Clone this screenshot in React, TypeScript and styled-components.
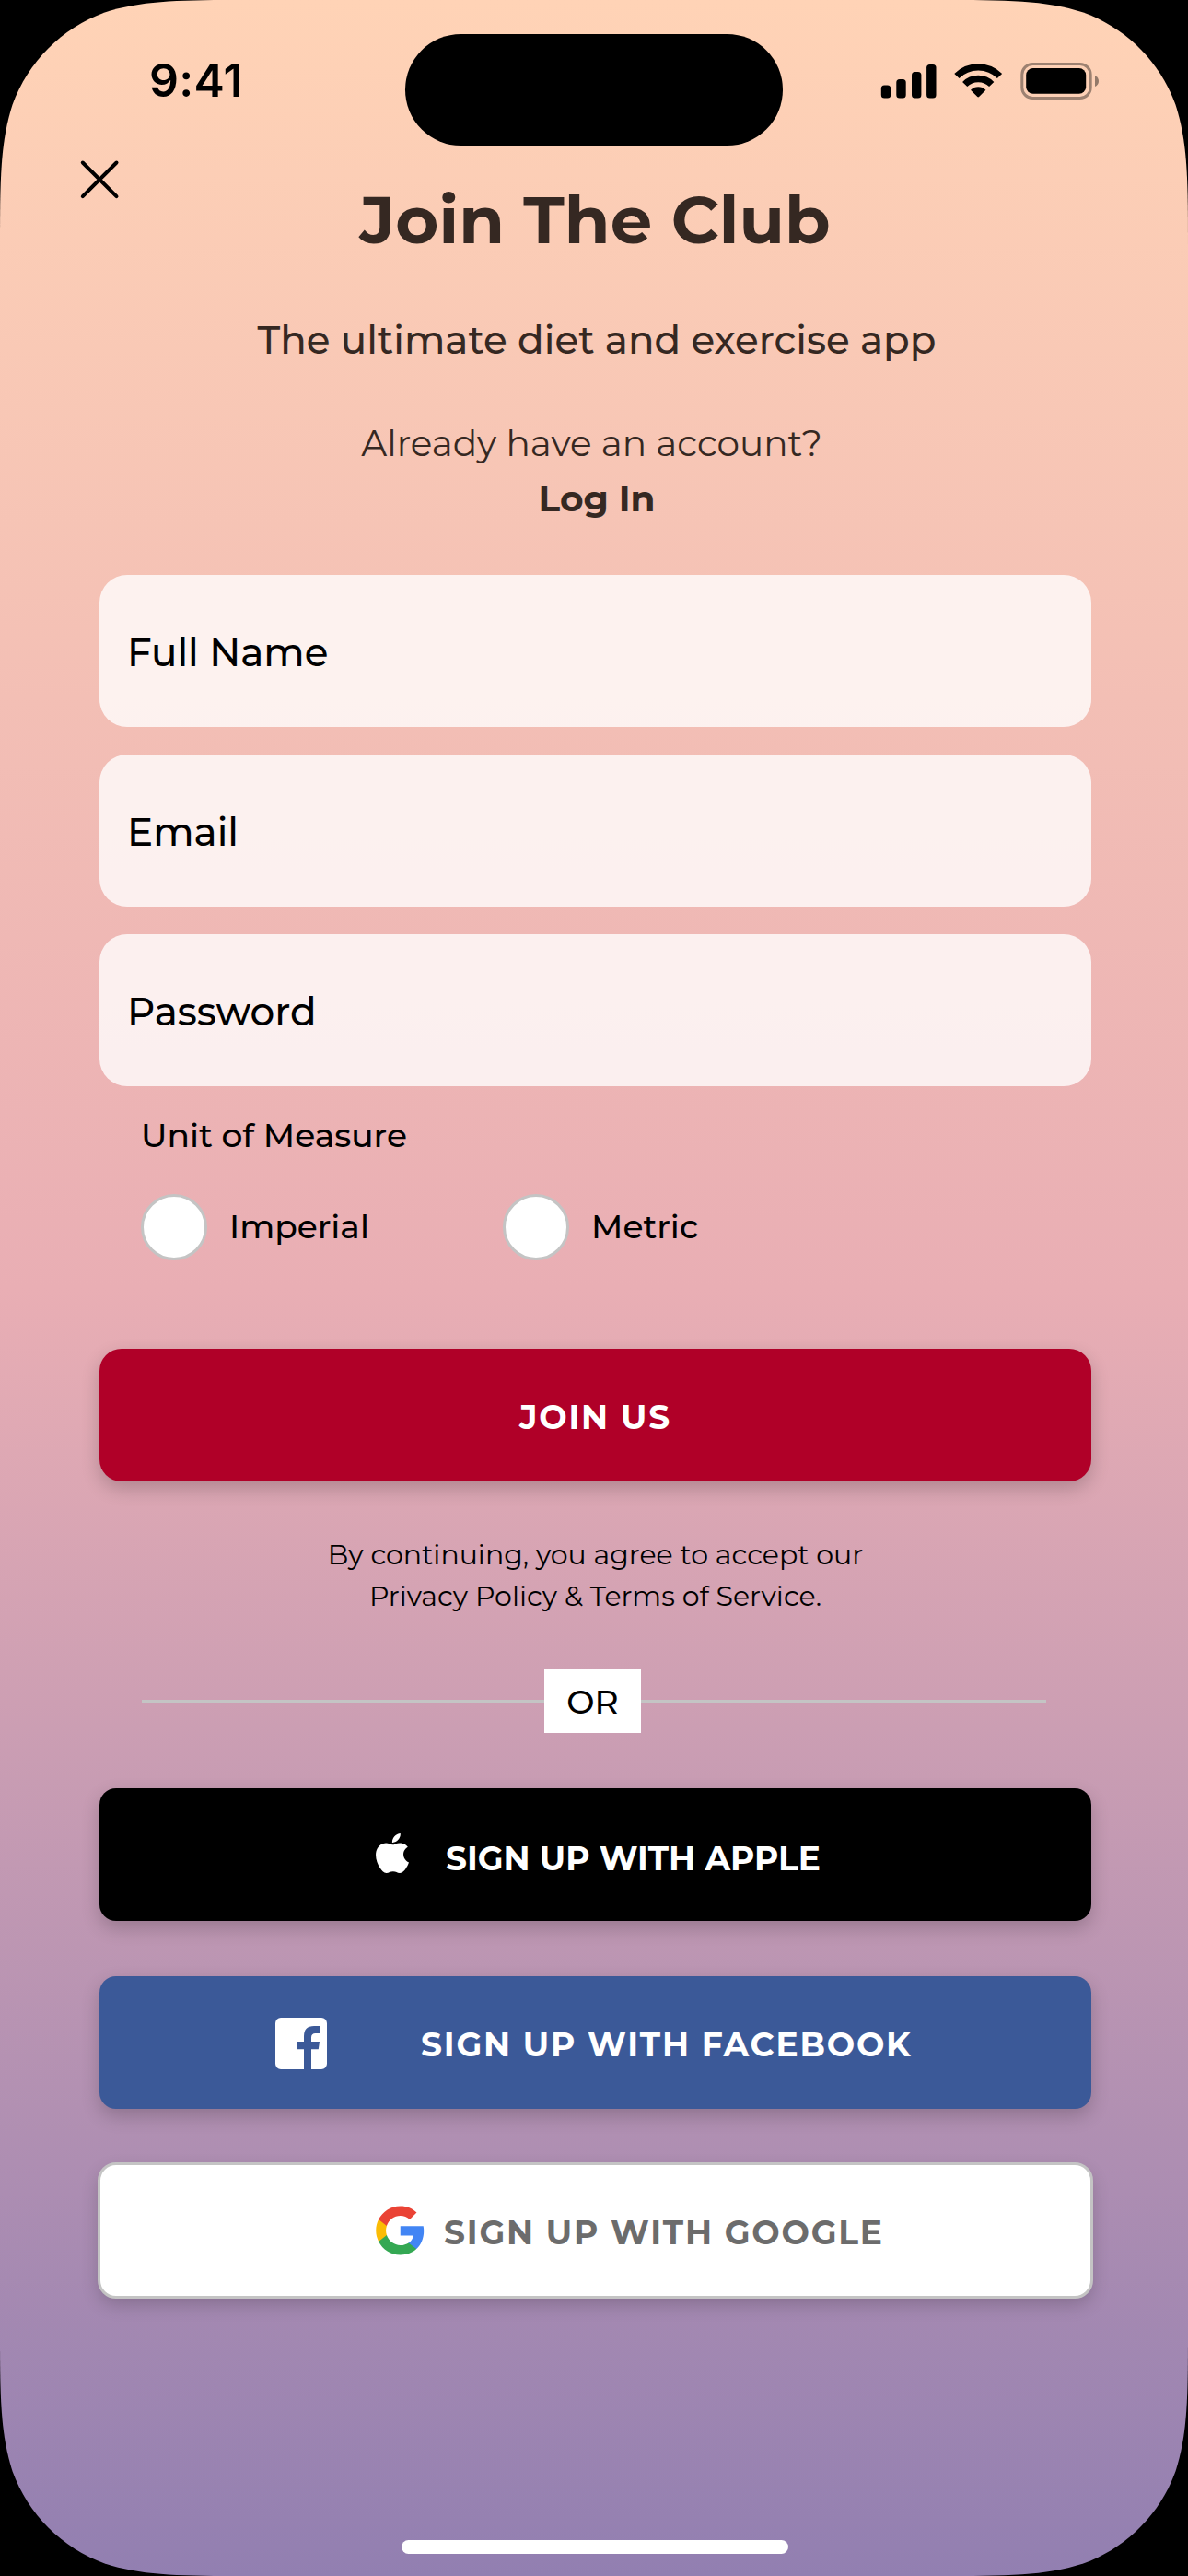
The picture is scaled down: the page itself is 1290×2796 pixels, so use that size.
import React from "react";
import styled, { createGlobalStyle } from "styled-components";

const GlobalStyle = createGlobalStyle`
  * { box-sizing: border-box; }
  html, body { margin: 0; background: #000; }
  button, input { font: inherit; border: 0; padding: 0; margin: 0; }
`;

const INK = "#352822";

const Screen = styled.main`
  width: 1290px;
  height: 2796px;
  position: relative;
  overflow: hidden;
  display: flex;
  flex-direction: column;
  align-items: center;
  font-family: Montserrat, Inter, "Noto Sans", sans-serif;
  color: #000;
  background: linear-gradient(180deg, #ffd3b6 0%, #e9aeb4 50%, #927fb1 100%);
  clip-path: path("M0 275 C0 196 0 156 13.5 113.7 C30.4 67.1 67.1 30.4 113.7 13.5 C156 0 196 0 275 0 L1015 0 C1094 0 1134 0 1176.3 13.5 C1222.9 30.4 1259.6 67.1 1276.5 113.7 C1290 156 1290 196 1290 275 L1290 2521 C1290 2600 1290 2640 1276.5 2682.3 C1259.6 2728.9 1222.9 2765.6 1176.3 2782.5 C1134 2796 1094 2796 1015 2796 L275 2796 C196 2796 156 2796 113.7 2782.5 C67.1 2765.6 30.4 2728.9 13.5 2682.3 C0 2640 0 2600 0 2521 Z");
`;

const StatusBar = styled.header`
  width: 100%;
  height: 158px;
  padding: 37px 97px 0 162px;
  display: grid;
  grid-template-columns: 278px 410px 1fr;
  align-items: start;
`;

const Clock = styled.time`
  font: 600 50px/60px Inter, sans-serif;
  padding-top: 20px;
  letter-spacing: 0.3px;
`;

const Island = styled.div`
  height: 121px;
  border-radius: 61px;
  background: #000;
`;

const StatusIcons = styled.div`
  display: flex;
  justify-content: flex-end;
  padding-top: 31px;
`;

const CloseButton = styled.button`
  align-self: flex-start;
  width: 44px;
  height: 44px;
  margin: 15px 0 0 86px;
  background: none;
  display: flex;
`;

const Line = styled.p<{ $size: number; $height: number; $weight: number; $left?: number; $right?: number; $top?: number; $color?: string }>`
  margin: ${(p) => p.$top ?? 0}px 0 0;
  padding: 0 ${(p) => p.$right ?? 0}px 0 ${(p) => p.$left ?? 0}px;
  font-size: ${(p) => p.$size}px;
  line-height: ${(p) => p.$height}px;
  font-weight: ${(p) => p.$weight};
  color: ${(p) => p.$color ?? INK};
  white-space: nowrap;
`;

const Title = styled.h1`
  margin: -24px 0 0;
  padding-left: 2px;
  font-size: 72px;
  line-height: 90px;
  font-weight: 700;
  color: ${INK};
`;

const Form = styled.form`
  width: 1077px;
  margin: 53px 0 0 3px;
  display: flex;
  flex-direction: column;
`;

const Fields = styled.div`
  display: flex;
  flex-direction: column;
  gap: 30px;
`;

const Field = styled.input`
  height: 165px;
  padding: 2px 30px 0;
  border-radius: 30px;
  background: rgba(255, 255, 255, 0.79);
  font-size: 42px;
  font-weight: 500;
  outline: none;
  &::placeholder { color: #000; opacity: 1; }
`;

const Units = styled.fieldset`
  margin: 30px 0 0;
  padding: 0 45px;
  border: 0;
  height: 255px;
`;

const Legend = styled.legend`
  padding: 0;
  font-size: 36px;
  line-height: 46px;
  font-weight: 500;
`;

const Options = styled.div`
  margin-top: 41px;
  display: grid;
  grid-template-columns: 393px 393px;
`;

const Option = styled.label`
  display: flex;
  align-items: center;
  gap: 24px;
  font-size: 36px;
  font-weight: 500;
`;

const OptionText = styled.span`
  padding-bottom: 2px;
`;

const Radio = styled.input`
  appearance: none;
  width: 72px;
  height: 72px;
  flex: none;
  border-radius: 50%;
  border: 3px solid #c4c4c4;
  background: #fff;
`;

const Button = styled.button<{ $bg: string; $color?: string; $radius?: number; $track: number; $indent?: number; $gap?: number; $outlined?: boolean }>`
  height: 144px;
  width: 100%;
  display: flex;
  align-items: center;
  justify-content: ${(p) => (p.$indent ? "flex-start" : "center")};
  gap: ${(p) => p.$gap ?? 0}px;
  padding-left: ${(p) => p.$indent ?? 0}px;
  border-radius: ${(p) => p.$radius ?? 18}px;
  background: ${(p) => p.$bg};
  color: ${(p) => p.$color ?? "#fff"};
  font-size: 36px;
  font-weight: 700;
  letter-spacing: ${(p) => p.$track}px;
  white-space: nowrap;
  outline: ${(p) => (p.$outlined ? "3px solid #c4c4c4" : "none")};
  outline-offset: -1.5px;
  box-shadow: 0 8px 20px rgba(0, 0, 0, 0.2);
`;

const Label = styled.span<{ $drop: number }>`
  padding-top: ${(p) => p.$drop}px;
`;

const IconSlot = styled.span<{ $raise?: number; $drop?: number }>`
  display: flex;
  flex: none;
  padding: ${(p) => p.$drop ?? 0}px 0 ${(p) => p.$raise ?? 0}px;
`;

const Terms = styled.div`
  margin-top: 57px;
  display: flex;
  flex-direction: column;
  align-items: center;
`;

const Divider = styled.div`
  width: 982px;
  height: 69px;
  margin: 57px auto 60px 46px;
  display: grid;
  grid-template-columns: 437px 105px 1fr;
  align-items: center;
`;

const Rule = styled.span`
  height: 3px;
  background: #c4c4c4;
`;

const Or = styled.span`
  height: 69px;
  padding-top: 1px;
  display: flex;
  align-items: center;
  justify-content: center;
  background: #fff;
  font-size: 36px;
  font-weight: 500;
`;

const Socials = styled.div`
  display: flex;
  flex-direction: column;
  gap: 60px;
`;

const HomeIndicator = styled.div`
  width: 420px;
  height: 15px;
  margin: auto 0 24px 2px;
  border-radius: 8px;
  background: #fff;
`;

const SignalGlyphs = () => (
  <svg width="237" height="40" viewBox="0 0 237 40">
    <rect x="0.8" y="24.5" width="10.4" height="14" rx="3.5" />
    <rect x="17.3" y="18" width="10.4" height="20.5" rx="3.5" />
    <rect x="34" y="10" width="10.4" height="28.5" rx="3.5" />
    <rect x="50.1" y="2" width="10.4" height="36.5" rx="3.5" />
    <g fill="none" stroke="#000" strokeWidth="7.4">
      <path d="M82.9 14.5 A33 33 0 0 1 129.5 14.5" />
      <path d="M91.7 23.5 A20.5 20.5 0 0 1 120.7 23.5" />
    </g>
    <path d="M98 29.7 A11.6 11.6 0 0 1 114.4 29.7 L107.1 37 Q106.2 37.9 105.3 37 Z" />
    <rect x="153.8" y="1.5" width="74.4" height="37" rx="11.5" fill="none" stroke="#000" strokeOpacity=".38" strokeWidth="3" />
    <rect x="158.2" y="6" width="65" height="27.8" rx="7.5" />
    <path d="M233 14 Q237 16 237 20 Q237 24 233 26 Z" fillOpacity=".42" />
  </svg>
);

const CloseGlyph = () => (
  <svg width="44" height="44" viewBox="0 0 44 44" stroke="#000" strokeWidth="4" strokeLinecap="round">
    <path d="M3.8 3.5 40.5 40.2M40.5 3.5 3.8 40.2" />
  </svg>
);

const AppleGlyph = () => (
  <svg width="36" height="43" viewBox="2.2 0 19.6 24" preserveAspectRatio="none" fill="#fff">
    <path d="M12.152 6.896c-.948 0-2.415-1.078-3.96-1.04-2.04.027-3.91 1.183-4.961 3.014-2.117 3.675-.546 9.103 1.519 12.09 1.013 1.454 2.208 3.09 3.792 3.039 1.52-.065 2.09-.987 3.935-.987 1.831 0 2.35.987 3.96.948 1.637-.026 2.676-1.48 3.676-2.948 1.156-1.688 1.636-3.325 1.662-3.415-.039-.013-3.182-1.221-3.22-4.857-.026-3.04 2.48-4.494 2.597-4.559-1.429-2.09-3.623-2.324-4.39-2.376-2-.156-3.675 1.09-4.61 1.09zM15.53 3.83c.843-1.012 1.4-2.427 1.245-3.83-1.207.052-2.662.805-3.532 1.818-.78.896-1.454 2.338-1.273 3.714 1.338.104 2.715-.688 3.559-1.701" />
  </svg>
);

const FacebookGlyph = () => (
  <svg width="56" height="56" viewBox="0 0 56 56" fill="#fff">
    <path d="M6 0H50A6 6 0 0 1 56 6V50A6 6 0 0 1 50 56H39V34.3H46.8L48 26H39V21.5Q39 17 43.5 17H48V9H42Q31 9 31 20V26H23V34.3H31V56H6A6 6 0 0 1 0 50V6A6 6 0 0 1 6 0Z" />
  </svg>
);

const GoogleGlyph = () => (
  <svg width="53" height="54" viewBox="0.9 0.9 22 22.2">
    <path fill="#4285F4" d="M22.56 12.25c0-.78-.07-1.53-.2-2.25H12v4.26h5.92c-.26 1.37-1.04 2.53-2.21 3.31v2.77h3.57c2.08-1.92 3.28-4.74 3.28-8.09z" />
    <path fill="#34A853" d="M12 23c2.97 0 5.46-.98 7.28-2.66l-3.57-2.77c-.98.66-2.23 1.06-3.71 1.06-2.86 0-5.29-1.93-6.16-4.53H2.18v2.84C3.99 20.53 7.7 23 12 23z" />
    <path fill="#FBBC05" d="M5.84 14.09c-.22-.66-.35-1.36-.35-2.09s.13-1.43.35-2.09V7.07H2.18C1.43 8.55 1 10.22 1 12s.43 3.45 1.18 4.93l3.66-2.84z" />
    <path fill="#EA4335" d="M12 5.38c1.62 0 3.06.56 4.21 1.64l3.15-3.15C17.45 2.09 14.97 1 12 1 7.7 1 3.99 3.47 2.18 7.07l3.66 2.84c.87-2.6 3.3-4.53 6.16-4.53z" />
  </svg>
);

export default function App() {
  return (
    <>
      <GlobalStyle />
      <Screen>
        <StatusBar>
          <Clock>9:41</Clock>
          <Island />
          <StatusIcons><SignalGlyphs /></StatusIcons>
        </StatusBar>
        <CloseButton aria-label="Close"><CloseGlyph /></CloseButton>
        <Title>Join The Club</Title>
        <Line $size={42} $height={52} $weight={500} $top={60} $left={6}>The ultimate diet and exercise app</Line>
        <Line $size={39} $height={60} $weight={400} $top={56} $right={5}>Already have an account?</Line>
        <Line as="a" $size={39} $height={60} $weight={700} $left={6}>Log In</Line>
        <Form>
          <Fields>
            <Field placeholder="Full Name" />
            <Field placeholder="Email" />
            <Field placeholder="Password" />
          </Fields>
          <Units>
            <Legend>Unit of Measure</Legend>
            <Options>
              <Option><Radio type="radio" name="unit" /><OptionText>Imperial</OptionText></Option>
              <Option><Radio type="radio" name="unit" /><OptionText>Metric</OptionText></Option>
            </Options>
          </Units>
          <Button type="button" $bg="#b00028" $radius={24} $track={1.8}><Label $drop={4}>JOIN US</Label></Button>
          <Terms>
            <Line $size={30} $height={45} $weight={400} $color="#000">By continuing, you agree to accept our</Line>
            <Line $size={30} $height={45} $weight={400} $color="#000">Privacy Policy &amp; Terms of Service.</Line>
          </Terms>
          <Divider><Rule /><Or>OR</Or><Rule /></Divider>
          <Socials>
            <Button type="button" $bg="#000" $indent={300} $gap={40} $track={0}>
              <IconSlot $raise={3}><AppleGlyph /></IconSlot>
              <Label $drop={8}>SIGN UP WITH APPLE</Label>
            </Button>
            <Button type="button" $bg="#3b5998" $indent={191} $gap={102} $track={1.8}>
              <IconSlot $drop={2}><FacebookGlyph /></IconSlot>
              <Label $drop={4}>SIGN UP WITH FACEBOOK</Label>
            </Button>
            <Button type="button" $bg="#fff" $color="#6c6c6c" $indent={300} $gap={21} $track={1.8} $outlined>
              <IconSlot><GoogleGlyph /></IconSlot>
              <Label $drop={4}>SIGN UP WITH GOOGLE</Label>
            </Button>
          </Socials>
        </Form>
        <HomeIndicator />
      </Screen>
    </>
  );
}
